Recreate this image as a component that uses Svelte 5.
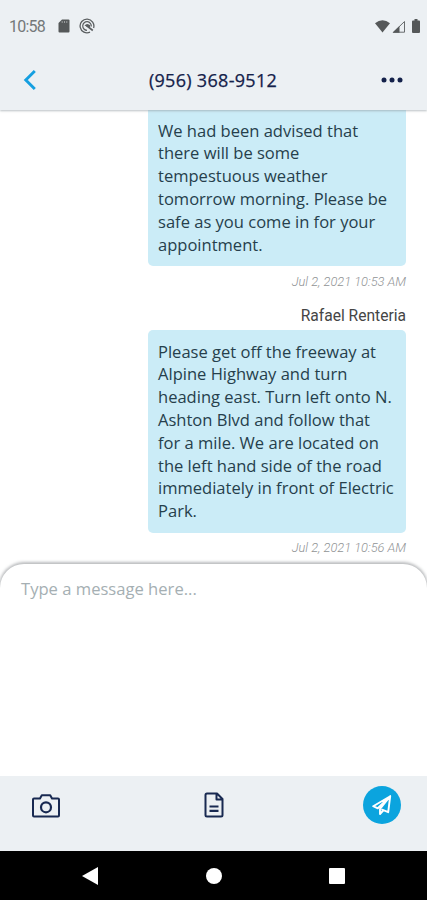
<script>
  const messages = [
    {
      sender: '',
      lines: ['We had been advised that', 'there will be some', 'tempestuous weather', 'tomorrow morning. Please be', 'safe as you come in for your', 'appointment.'],
      time: 'Jul 2, 2021 10:53 AM'
    },
    {
      sender: 'Rafael Renteria',
      lines: ['Please get off the freeway at', 'Alpine Highway and turn', 'heading east. Turn left onto N.', 'Ashton Blvd and follow that', 'for a mile. We are located on', 'the left hand side of the road', 'immediately in front of Electric', 'Park.'],
      time: 'Jul 2, 2021 10:56 AM'
    }
  ];
</script>

<div class="phone">
  <header>
    <div class="status">
      <span class="clock">10:58</span>
      <svg class="sd" width="12" height="14" viewBox="0 0 12 14"><path d="M4 .5h6.500q1 0 1 1v11q0 1-1 1h-9q-1 0-1-1V4z" fill="#555859" /><path d="M4.200 2v2M6.500 2v2M8.800 2v2" stroke="#9a9d9e" stroke-width="1" /></svg>
      <svg class="at" width="16" height="16" viewBox="0 0 16 16" fill="none" stroke="#5b5f61"><path d="M11 14.200A6.900 6.900 0 1 1 14.600 10" stroke-width="1.300" /><path d="M8 12.300A4.300 4.300 0 1 1 12.300 8.500" stroke-width="1.200" /><path d="M5.500 7.500Q8 4.500 11.500 7.500L10.500 10z" fill="#5b5f61" stroke="none" /><path d="M7.500 7.500l6.300 5" stroke-width="1.600" /></svg>
      <span class="grow"></span>
      <svg width="15" height="13" viewBox="0 0 15 13"><path d="M0 3.200Q7.500-2.700 15 3.200L7.500 12.500z" fill="#555859" /></svg>
      <svg class="signal" width="14" height="13" viewBox="0 0 14 13"><path d="M12.500 1.500v10.700H1.500z" fill="none" stroke="#686c6d" stroke-width="1" /><path d="M.5 12.700L7.500 6v6.700z" fill="#555859" /></svg>
      <svg class="battery" width="8" height="14" viewBox="0 0 8 14"><path d="M2.500 0h3v1.500H7q1 0 1 1V13q0 1-1 1H1q-1 0-1-1V2.500q0-1 1-1h1.500z" fill="#555859" /></svg>
    </div>
    <div class="titlebar">
      <svg width="14" height="22" viewBox="0 0 14 22"><path d="M12.800 2L3.800 11l9 9" fill="none" stroke="#159fe0" stroke-width="2.900" /></svg>
      <h1>(956) 368-9512</h1>
      <svg width="22" height="6" viewBox="0 0 22 6" fill="#14214a"><circle cx="3" cy="3" r="2.500" /><circle cx="11" cy="3" r="2.500" /><circle cx="19" cy="3" r="2.500" /></svg>
    </div>
  </header>

  <main>
    {#each messages as message}
      {#if message.sender}<div class="sender">{message.sender}</div>{/if}
      <div class="bubble">
        {#each message.lines as line}<div class="line">{line}</div>{/each}
      </div>
      <time>{message.time}</time>
    {/each}
  </main>

  <section class="composer"><span>Type a message here...</span></section>

  <div class="tools">
    <svg width="28" height="24" viewBox="0 0 28 24" fill="none" stroke="#182951" stroke-width="2"><path d="M2 4.500h6L9.800 1.200h8.400L20 4.500h6q1 0 1 1v16q0 1-1 1H2q-1 0-1-1v-16q0-1 1-1z" stroke-linejoin="round" /><circle cx="14" cy="13.300" r="5" stroke-width="2.200" /></svg>
    <svg class="doc" width="20" height="26" viewBox="0 0 20 26" fill="none" stroke="#182951" stroke-width="2"><path d="M3 1.500h10L18.500 7v16q0 1.500-1.500 1.500H3Q1.500 24.500 1.500 23V3Q1.500 1.500 3 1.500zM12.500 1.500V7.500h6" stroke-linejoin="round" /><path d="M5.500 14.500h9M5.500 18.800h9" stroke-width="2.200" /></svg>
    <button aria-label="Send">
      <svg width="20" height="20" viewBox="0 0 20 20" fill="none" stroke="#fff" stroke-width="1.900" stroke-linejoin="round" stroke-linecap="round"><path d="M18.200 1.200L1.200 11.200l4.600 2.100L18.200 1.200 16.200 17.200l-6.100-2.500M18.200 1.200L8 14v5l3.200-3.500" /></svg>
    </button>
  </div>

  <nav>
    <svg width="16" height="18" viewBox="0 0 16 18"><path d="M0 9L16 0v18z" fill="#fff" /></svg>
    <svg width="16" height="16" viewBox="0 0 16 16"><circle cx="8" cy="8" r="8" fill="#fff" /></svg>
    <svg width="16" height="16" viewBox="0 0 16 16"><rect width="16" height="16" rx="1" fill="#fff" /></svg>
  </nav>
</div>

<style>
  :global(body) { margin: 0; }
  * { box-sizing: border-box; }
  svg { display: block; flex: none; }
  .phone {
    width: 427px; height: 900px; display: flex; flex-direction: column; overflow: hidden;
    background: #fff; font-family: "Open Sans", "Noto Sans", sans-serif; color: #263f4c;
  }
  header { height: 110px; flex: none; background: #ecf0f3; box-shadow: 0 1px 2px #8c969d99; position: relative; z-index: 1; }
  .status { height: 52px; display: flex; align-items: center; padding: 0 7px 0 9px; }
  .clock { font: 16px/20px Roboto, sans-serif; color: #747879; width: 49px; letter-spacing: -.8px; padding-top: 1px; }
  .at { margin-left: 9px; }
  .grow { flex: 1; }
  .signal { margin-left: 2px; }
  .battery { margin-left: 6px; }
  .titlebar { height: 58px; padding: 0 24px 2px 22px; display: flex; align-items: center; justify-content: space-between; }
  h1 { margin: 0 0 0 9px; font-size: 18px; line-height: 24px; font-weight: 500; color: #14214a; letter-spacing: .3px; -webkit-text-stroke: .25px #14214a; }
  main { height: 454px; flex: none; padding: 0 21px 0 148px; display: flex; flex-direction: column; overflow: hidden; }
  .bubble { background: #cbecf7; border-radius: 5px; padding: 10.700px 10px 9.900px; flex: none; }
  .bubble:first-child { border-radius: 0 0 5px 5px; padding-top: 9.700px; }
  .line { font-size: 16.55px; line-height: 22.8px; white-space: nowrap; }
  time { font: italic 300 12.8px/16px Roboto, sans-serif; color: #909395; text-align: right; margin-top: 7.500px; }
  .sender { font: 15.600px/20px Roboto, sans-serif; color: #454545; text-align: right; margin: 16px 0 4px; }
  .composer {
    flex: 1; border-radius: 24px 24px 0 0; background: #fff; padding: 13px 21px;
    box-shadow: 0 -1px 3px 1px #8c8f9299; position: relative; z-index: 1;
    font-size: 16.600px; line-height: 24px; font-weight: 500; color: #a5afb3;
  }
  .tools { height: 75px; flex: none; background: #ecf0f3; display: flex; justify-content: space-between; padding: 10px 26px 0 32px; position: relative; z-index: 2; }
  .tools > svg { margin-top: 8px; }
  .tools > .doc { margin: 6px 0 0 4px; }
  button { width: 38px; height: 38px; margin: 0; padding: 0; border: 0; border-radius: 50%; background: #0ba4de; display: flex; align-items: center; justify-content: center; }
  nav { height: 49px; flex: none; background: #000; display: flex; justify-content: space-between; align-items: center; padding: 0 82px; position: relative; z-index: 2; }
</style>
